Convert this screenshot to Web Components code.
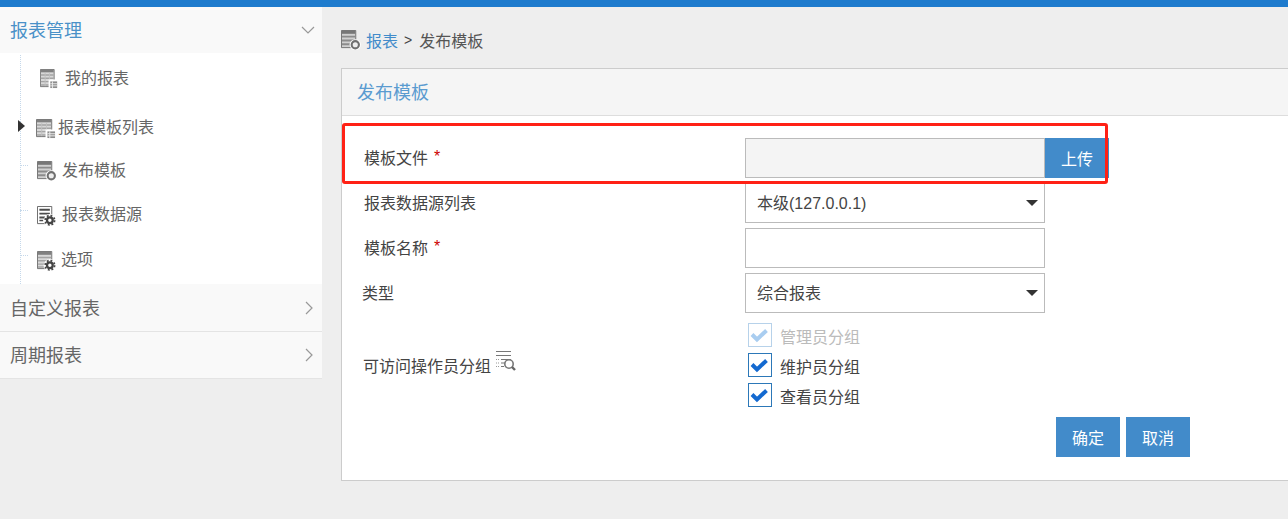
<!DOCTYPE html>
<html lang="zh"><head><meta charset="utf-8"><title>发布模板</title>
<style>
html,body{margin:0;height:519px;overflow:hidden;background:#eee;font:16px "Noto Sans CJK SC","Liberation Sans",sans-serif;color:#555}
rp-app{display:flex;flex-direction:column;height:519px}
.latin{font-family:"Liberation Sans","Noto Sans CJK SC",sans-serif}
</style></head><body>
<rp-app>
  <rp-topbar></rp-topbar>
  <rp-main>
    <rp-sidebar>
      <rp-acc-head open active>报表管理</rp-acc-head>
      <rp-tree>
        <rp-tree-item h="50" x="40" w="18" it="16" tt="12" gap="7" icon="grid">我的报表</rp-tree-item>
        <rp-tree-item h="48" x="36" w="20" it="16" tt="11" gap="2" icon="grid" caret>报表模板列表</rp-tree-item>
        <rp-tree-item h="41" x="37" w="20" it="10" tt="6" gap="5" icon="plus" tick="14">发布模板</rp-tree-item>
        <rp-tree-item h="45" x="37" w="20" it="14" tt="9" gap="5" icon="gear" tick="18">报表数据源</rp-tree-item>
        <rp-tree-item h="47" x="37" w="20" it="14" tt="9" gap="4" icon="gearrows" tick="18">选项</rp-tree-item>
      </rp-tree>
      <rp-acc-head tall>自定义报表</rp-acc-head>
      <rp-acc-head>周期报表</rp-acc-head>
    </rp-sidebar>
    <rp-content>
      <rp-crumb><a slot="link">报表</a>发布模板</rp-crumb>
      <rp-panel heading="发布模板">
        <rp-highlight></rp-highlight>
        <rp-row required><span slot="label">模板文件</span><rp-upload></rp-upload></rp-row>
        <rp-row><span slot="label">报表数据源列表</span><rp-select>本级<span class="latin">(127.0.0.1)</span></rp-select></rp-row>
        <rp-row required><span slot="label">模板名称</span><rp-input></rp-input></rp-row>
        <rp-row shift="-2"><span slot="label">类型</span><rp-select>综合报表</rp-select></rp-row>
        <rp-group>
          <span slot="label">可访问操作员分组</span>
          <rp-check disabled>管理员分组</rp-check>
          <rp-check>维护员分组</rp-check>
          <rp-check>查看员分组</rp-check>
        </rp-group>
        <rp-actions><rp-button>确定</rp-button><rp-button>取消</rp-button></rp-actions>
      </rp-panel>
    </rp-content>
  </rp-main>
</rp-app>
<script>
function el(name, css, html){
  customElements.define(name, class extends HTMLElement{
    constructor(){super();this.attachShadow({mode:'open'});}
    connectedCallback(){
      if(this._d)return;this._d=1;
      const h=typeof html==='function'?html(this):html;
      this.shadowRoot.innerHTML='<style>'+css+'</style>'+h;
    }
  });
}
const GEAR=`<circle cx="13.500" cy="15" r="6.500" fill="#fff"/><circle cx="13.500" cy="15" r="3" fill="none" stroke="#444" stroke-width="2.400"/><circle cx="13.500" cy="15" r="5" fill="none" stroke="#444" stroke-width="1.800" stroke-dasharray="2 1.930"/>`;
const ICONS={
 grid:`<path d="M.5.500h16v18H.5z" fill="#d8d8d8" stroke="#707070"/><path d="M1 1h15v2.500H1z" fill="#808080"/><path d="M1 5.500h15V7H1zM1 9h15v1.500H1zM1 12.500h15V14H1zM1 16h15v1.500H1z" fill="#a4a4a4"/><path d="M6 4v14M11 4v14" stroke="#c0c0c0"/><path d="M10 11h11v10H10z" fill="#fff"/><path d="M12 13h8v7h-8z" fill="#8c8c8c"/><path d="M12 15.500h8M12 17.700h8M14.500 13v7" stroke="#eee"/>`,
 plus:`<path d="M.5.500h15v18H.5z" fill="#d0d0d0" stroke="#707070"/><path d="M1 1h14v3H1z" fill="#777"/><path d="M1 6h14v2H1zM1 10h14v2H1zM1 14h8v2H1z" fill="#8c8c8c"/><circle cx="15" cy="15.500" r="5.800" fill="#fff"/><circle cx="15" cy="15.500" r="3.800" fill="#eee" stroke="#707070" stroke-width="2.200"/>`,
 gear:`<path d="M.5.500h15v18H.5z" fill="#fff" stroke="#666"/><path d="M2.500 3h11v2h-11zM2.500 7h11v2h-11zM2.500 11h6v2h-6zM2.500 14.500h4v1.500h-4z" fill="#4c4c4c"/>`+GEAR,
 gearrows:`<path d="M.5.500h15v18H.5z" fill="#d8d8d8" stroke="#707070"/><path d="M1 1h14v3H1z" fill="#808080"/><path d="M1 6h14v1.500H1zM1 9.500h14V11H1zM1 13h8v1.500H1zM1 16h6v1.500H1z" fill="#a4a4a4"/>`+GEAR
};
el('rp-icon',':host{display:block;flex:none}svg{display:block}',
  h=>{const w=h.getAttribute('w')||20;return `<svg width="${w}" height="20" viewBox="0 0 21 21" preserveAspectRatio="none">${ICONS[h.getAttribute('kind')]||''}</svg>`});
el('rp-topbar',':host{display:block;height:7px;background:#1e7bcd;flex:none}','');
el('rp-main',':host{display:flex;flex:1;min-height:0}','<slot></slot>');
el('rp-sidebar',':host{display:block;width:322px;flex:none}','<slot></slot>');
el('rp-acc-head',`:host{display:flex;align-items:center;justify-content:space-between;height:46px;padding:0 7px 0 10px;background:#f9f9f9;font-size:18px;color:#666;border-bottom:1px solid #e4e4e4}
 :host([active]){color:#4a91c8;border-bottom:0}
 :host([tall]){height:47px}
 span{margin-bottom:2px}
 svg{display:block}`,
 h=>h.hasAttribute('open')
  ?`<span><slot></slot></span><svg width="14" height="8" viewBox="0 0 14 8"><path d="M1 1l6 6 6-6" fill="none" stroke="#999" stroke-width="1.200"/></svg>`
  :`<span><slot></slot></span><svg width="9" height="14" viewBox="0 0 9 14" style="margin-right:1px"><path d="M1 1l6 6-6 6" fill="none" stroke="#999" stroke-width="1.200"/></svg>`);
el('rp-tree',`:host{display:block;position:relative;background:#fff;height:231px}
 :host::before{content:"";position:absolute;left:20px;top:2px;bottom:0;border-left:1px dotted #c5d8ea}`,'<slot></slot>');
el('rp-tree-item',`:host{display:flex;align-items:flex-start;position:relative;font-size:16px;color:#666;box-sizing:border-box}
 .caret{position:absolute;left:18px;top:17px;width:0;height:0;border-left:7px solid #333;border-top:6px solid transparent;border-bottom:6px solid transparent}
 .tick{position:absolute;left:20px;width:8px;border-top:1px dotted #c5d8ea}
 span{line-height:24px}`,
 h=>{const a=n=>h.getAttribute(n);h.style.height=a('h')+'px';h.style.paddingLeft=a('x')+'px';
  return `${h.hasAttribute('caret')?'<i class="caret"></i>':''}${h.hasAttribute('tick')?`<i class="tick" style="top:${a('tick')}px"></i>`:''}<rp-icon kind="${a('icon')}" w="${a('w')}" style="margin-top:${a('it')}px"></rp-icon><span style="margin-left:${a('gap')}px;margin-top:${a('tt')}px"><slot></slot></span>`});
el('rp-content',':host{display:flex;flex-direction:column;flex:1;min-width:0;padding-left:19px}','<slot></slot>');
el('rp-crumb',`:host{display:flex;align-items:center;height:61px;flex:none;font-size:16px;color:#555;padding-top:5px;box-sizing:border-box}
 ::slotted(a){color:#428bca;margin-left:5px}
 .sep{font:14px "Liberation Sans",sans-serif;margin:0 7px 0 6px;color:#444}`,
 `<rp-icon kind="plus"></rp-icon><slot name="link"></slot><span class="sep">&gt;</span><slot></slot>`);
el('rp-panel',`:host{display:block;position:relative;height:413px;box-sizing:border-box;background:#fff;border:1px solid #ccc;border-right:0}
 header{height:46px;box-sizing:content-box;background:#f5f5f5;border-bottom:1px solid #ddd;display:flex;align-items:center;padding-left:15px;font-size:18px;color:#5a9bd0}
 header span{margin-bottom:2px}
 .body{padding:22px 0 0 22px;position:relative}`,
 h=>`<header><span>${h.getAttribute('heading')}</span></header><div class="body"><slot></slot></div>`);
el('rp-highlight',`:host{position:absolute;left:0;top:7px;width:766px;height:61px;box-sizing:border-box;border:3px solid #ff2115;border-radius:3px;z-index:2;pointer-events:none}`,'');
el('rp-row',`:host{display:grid;grid-template-columns:381px 1fr;align-items:center;height:40px;margin-bottom:5px;font-size:16px;color:#444}
 .l{display:flex;align-items:center;padding-bottom:2px}
 .req{color:#c00;margin-left:6px;font-family:"Liberation Sans",sans-serif;font-size:16px;line-height:1}`,
 h=>`<div class="l" style="margin-left:${h.getAttribute('shift')||0}px"><slot name="label"></slot>${h.hasAttribute('required')?'<span class="req">*</span>':''}</div><div><slot></slot></div>`);
el('rp-upload',`:host{display:flex;height:40px}
 .f{width:300px;box-sizing:border-box;background:#f4f4f4;border:1px solid #bbb;height:40px}
 .b{width:64px;background:#428bca;color:#fff;display:flex;align-items:center;justify-content:center;font-size:16px}`,
 `<div class="f"></div><div class="b">上传</div>`);
el('rp-input',`:host{display:block;width:300px;height:40px;box-sizing:border-box;background:#fff;border:1px solid #bbb}`,'');
el('rp-select',`:host{display:flex;align-items:center;justify-content:space-between;width:300px;height:40px;box-sizing:border-box;background:#fff;border:1px solid #bbb;padding:0 6px 0 11px;color:#444;font-size:16px}
 span{padding-bottom:2px}
 i{width:0;height:0;border-top:6px solid #333;border-left:6px solid transparent;border-right:6px solid transparent}`,
 `<span><slot></slot></span><i></i>`);
el('rp-group',`:host{display:grid;grid-template-columns:381px 1fr;align-items:center;height:90px;padding-top:2px;font-size:16px;color:#444}
 .l{display:flex;align-items:center;margin-left:-1px}
 svg{display:block;margin:-8px 0 0 4px}
 .c{display:flex;flex-direction:column;padding-left:3px}`,
 `<div class="l"><slot name="label"></slot><svg width="21" height="22" viewBox="0 0 21 22"><path d="M1 1.500h15M1 5.500h15M6 9.500h10M6 13h4M6 16.500h3" stroke="#777" stroke-width="1.200" fill="none"/><path d="M1 9.500h3M1 13h3M1 16.500h3" stroke="#999" stroke-dasharray="1 1" fill="none"/><circle cx="14" cy="14" r="4.200" fill="#fff" stroke="#777" stroke-width="1.600"/><path d="M17 17l3 3" stroke="#666" stroke-width="2.400"/></svg></div><div class="c"><slot></slot></div>`);
el('rp-check',`:host{display:flex;align-items:center;height:30px;font-size:16px;color:#444;gap:8px}
 :host([disabled]){color:#bbb}
 .b{width:24px;height:24px;box-sizing:border-box;border:1.500px solid #2c78b8;flex:none;background:#fff}
 :host([disabled]) .b{border-color:#b7d2ea}
 svg{display:block}
 span{position:relative;top:1px}`,
 h=>`<div class="b"><svg width="21" height="21" viewBox="0 0 21 21"><path d="M3 10.500l5 5 9.500-9" fill="none" stroke="${h.hasAttribute('disabled')?'#a9cdf0':'#1369d0'}" stroke-width="4"/></svg></div><span><slot></slot></span>`);
el('rp-actions',':host{display:flex;gap:6px;padding-left:714px;margin-top:7px;margin-left:-22px}','<slot></slot>');
el('rp-button',`:host{display:flex;align-items:center;justify-content:center;width:64px;height:40px;background:#428bca;color:#fff;font-size:16px}`,'<slot></slot>');
el('rp-app',':host{display:flex;flex-direction:column;height:519px}','<slot></slot>');
</script>
</body></html>
